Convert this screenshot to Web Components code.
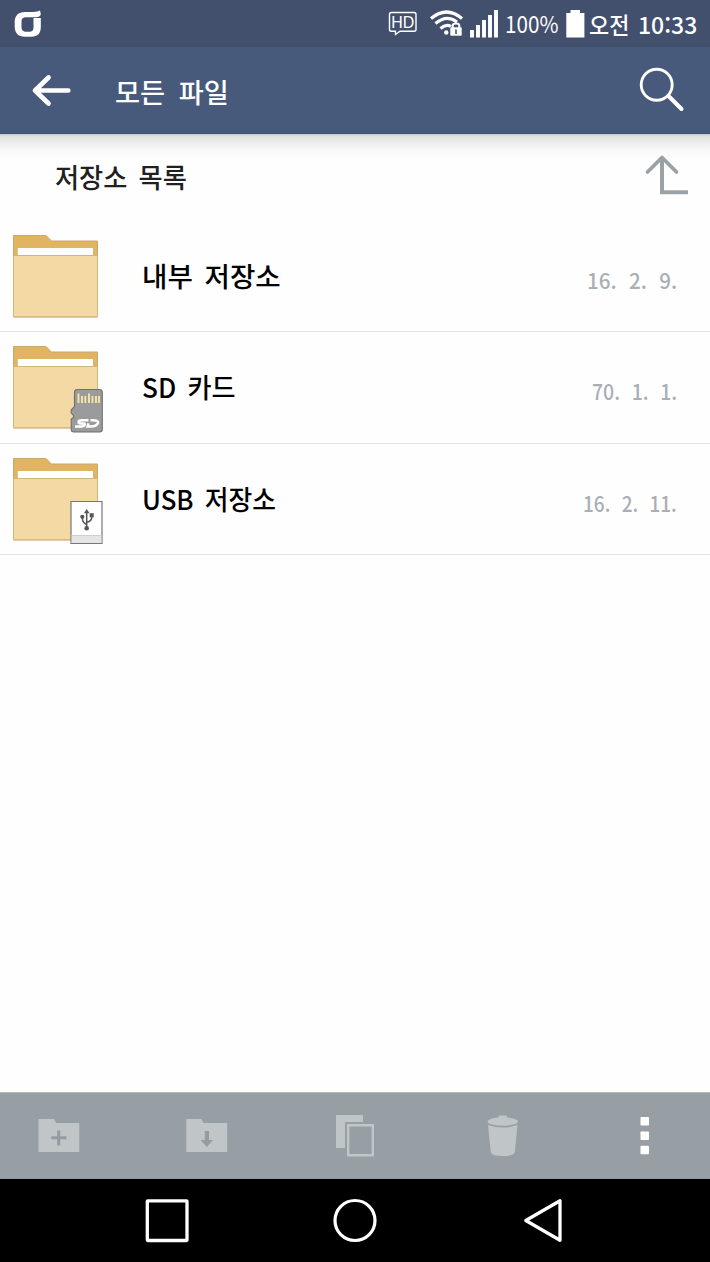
<!DOCTYPE html>
<html lang="ko">
<head>
<meta charset="utf-8">
<title>모든 파일</title>
<style>
html,body{margin:0;background:#fefefe}
body{width:710px;height:1262px;overflow:hidden;font-family:"Noto Sans CJK KR","Noto Sans",sans-serif}
</style>
</head>
<body>
<file-manager></file-manager>
<script>
const define = (name, html, init) => customElements.define(name, class extends HTMLElement {
  constructor() {
    super();
    this.attachShadow({ mode: 'open' }).innerHTML = html;
  }
  connectedCallback() { if (init) init.call(this, this.shadowRoot); }
});

// Single-line label condensed or expanded to the width it is given.
define('fit-label', `<style>
:host{display:block;white-space:nowrap;line-height:1;flex:none}
span{display:inline-block;transform-origin:0 50%}
</style><span><slot></slot></span>`, function (root) {
  const w = +this.getAttribute('width');
  const span = root.querySelector('span');
  this.style.width = w + 'px';
  span.style.transform = `scaleX(${w / span.offsetWidth})`;
});

define('status-bar', `<style>
:host{display:flex;box-sizing:border-box;height:47px;background:#42506e;border-bottom:1px solid #3f4d6b;color:#fff;align-items:flex-start}
svg{display:block;flex:none}
fit-label{font-size:23px;margin-top:12px;font-weight:400}
.pct{margin-left:5px}
.am{margin-left:4px;font-size:23px;font-weight:500;margin-top:13px}
.time{margin-left:9px;font-size:23px;margin-top:13px;font-weight:500}
.gap{flex:1}
.bat{margin-left:8px}
</style>
<svg width="50" height="46" fill="none" stroke="#fff">
 <path d="M40 10.500C38 12 34 12 29 12H25C18 12 14.700 16 14.700 22V26C14.700 33 18 36.800 25 36.800H31C38 36.800 40.800 33 40.800 27V18H33.500V27.500C33.500 30.500 32 31.700 29.500 31.700H26C23 31.700 21.500 30 21.500 27.500V21.500C21.500 18.500 23 17.200 26 17.200H36C39 17.200 40.800 16 40.800 14Z" fill="#fff" stroke="none"/>
</svg>
<span class="gap"></span>
<svg width="120" height="46" viewBox="380 0 120 46" fill="none" stroke="#fff">
 <path d="M391.500 12.500H414Q416 12.500 416 14.500V29.500Q416 31.300 414 31.300H400L395.500 34.500V31.300H391.500Q389.500 31.300 389.500 29.500V14.500Q389.500 12.500 391.500 12.500Z" stroke-width="1.400"/>
 <text x="391.200" y="28" font-family="Liberation Sans,sans-serif" font-size="17" textLength="23" lengthAdjust="spacingAndGlyphs" fill="#fff" stroke="none">HD</text>
 <path d="M431 18.500Q446.500 5.500 462 18.500" stroke-width="3.200"/>
 <path d="M435.500 23.500Q446.500 14 457 22" stroke-width="3.200"/>
 <path d="M440.500 28.500Q446 23.500 451 26.500" stroke-width="3.200"/>
 <circle cx="446.300" cy="32.500" r="2.200" fill="#fff" stroke="none"/>
 <rect x="450" y="27" width="12" height="9" rx="1" fill="#fff" stroke="#42506e" stroke-width=".6"/>
 <path d="M452.700 28V25.500Q452.700 23.500 456 23.500T459.300 25.500V28" stroke-width="2"/>
 <path d="M456 29.500V34" stroke="#42506e" stroke-width="1.600"/>
 <path d="M472 37.500V30M478 37.500V25M484 37.500V20M490 37.500V15M496 37.500V10" stroke-width="3.900"/>
</svg>
<fit-label class="pct" width="53">100%</fit-label>
<svg class="bat" width="19" height="46" viewBox="566 0 19 46"><path d="M566.300 13H570.500V10H580V13H584.400V37.500H566.300Z" fill="#fff"/></svg>
<fit-label class="am" width="40">오전</fit-label>
<fit-label class="time" width="59">10:33</fit-label>
<svg width="13" height="46"></svg>`);

define('app-header', `<style>
:host{display:flex;box-sizing:border-box;height:87px;background:#475a7b;border-bottom:1px solid #405273;color:#fff}
svg{display:block;flex:none}
fit-label{font-size:27px;font-weight:500;margin-top:31px;word-spacing:6px}
.gap{flex:1}
</style>
<svg width="115" height="86" viewBox="0 47 115 86" fill="none" stroke="#fff" stroke-linecap="round" stroke-linejoin="round"><path d="M48.500 77.500L35 90.500L48.500 103.500M35.500 90.500H68.300" stroke-width="4.700"/></svg>
<fit-label width="114">모든 파일</fit-label><span class="gap"></span>
<svg width="90" height="86" viewBox="620 47 90 86" fill="none" stroke="#fff"><circle cx="656.700" cy="84.700" r="15.500" stroke-width="2.900"/><path d="M668.500 96L681.500 109" stroke-width="4" stroke-linecap="round"/></svg>`);

define('list-header', `<style>
:host{display:flex;height:86px;color:#202020;background:linear-gradient(#cfcfcf 0,#cfcfcf 1px,#e0e0e0 2px,#ececec 8px,#f9f9f9 17px,#fefefe 26px)}
fit-label{font-size:27px;font-weight:500;margin:29px 0 0 55px;word-spacing:4px}
.gap{flex:1}
svg{display:block}
</style><fit-label width="132"><slot></slot></fit-label><span class="gap"></span>
<svg width="80" height="86" viewBox="630 134 80 86" fill="none" stroke="#9aa2a7"><path d="M662 158V192.200H688" stroke-width="4"/><path d="M647.500 172L662 157.500L676.500 172" stroke-width="3.800" stroke-linecap="round" stroke-linejoin="round"/></svg>`);

define('folder-icon', `<style>
:host{display:block;width:120px;height:96px;flex:none}
svg{display:block}
:host(:not([badge=sd])) .sd,:host(:not([badge=usb])) .usb{display:none}
</style>
<svg width="120" height="100" fill="none">
 <path d="M13.500 82V.5H46L51.500 6H97.500V82Z" fill="#e1b461" stroke="#c9a86c" stroke-width="1"/>
 <path d="M17.800 13H93V20.500H17.800Z" fill="#fff"/>
 <path d="M13.500 20.500H97.500V81.700H13.500Z" fill="#f4d9a4" stroke="#d3b57c" stroke-width="1"/>
 <g class="sd">
  <path d="M77 43.500H99.500Q102.300 43.500 102.300 46.300V83.500Q102.300 86 99.500 86H74Q71.200 86 71.200 83.500V73L73.500 71.500V69.500L71.200 67V64L74.500 60.500V46.500Q74.500 43.500 77 43.500Z" fill="#9b9b9b" stroke="#707070" stroke-width="1.100"/>
  <path d="M78.500 47.500V57M82 50V57M85.300 50V57M89 47.500V57M92.500 50V57M96 50V57M99 50V57" stroke="#f5e5a9" stroke-width="1.900"/>
  <path d="M88.500 74.300H82Q78.500 74.300 78.500 76T82 77.600H84Q85.500 77.800 84.500 79.300Q84 80.400 82 80.400H75" stroke="#fff" stroke-width="2.500"/>
  <path d="M90.500 74.300H93Q99 74.300 98 77Q96.700 80.400 90.500 80.400H87.500L88.500 77.300" stroke="#fff" stroke-width="2.500"/>
 </g>
 <g class="usb">
  <path d="M71 43.500H102V85.500H71Z" fill="#fff" stroke="#777" stroke-width="1.200"/>
  <path d="M71.700 77.200H101.400V85H71.700Z" fill="#e5e5e5"/><path d="M71.700 77.500H101.400" stroke="#cfcfcf"/>
  <g stroke="#555" stroke-width="1.500"><path d="M86.700 54V70M82.500 59.500V61Q82.500 64.500 86.700 66.500M91.700 58.500V59.500Q91.700 63 86.700 64.500"/></g>
  <path d="M86.700 51L89.500 55.200H83.900ZM89.700 55.300H93.700V59.300H89.700Z" fill="#555"/><circle cx="82.300" cy="58.800" r="2.100" fill="#555"/><circle cx="86.700" cy="70.300" r="2.300" fill="#555"/>
 </g>
</svg>`);

define('storage-row', `<style>
:host{display:flex;box-sizing:border-box;height:var(--h,112px);border-bottom:1px solid #e3e3e3;padding-right:33px}
folder-icon{margin-top:var(--top,15px)}
.name{font-size:27px;font-weight:500;color:#000;margin:var(--nt,42px) 0 0 22px;word-spacing:4px}
.gap{flex:1}
.date{font-size:22px;font-weight:500;color:#a9afb4;margin-top:var(--dt,48px);word-spacing:7px}
</style><folder-icon></folder-icon><fit-label class="name"><slot></slot></fit-label><span class="gap"></span><fit-label class="date"></fit-label>`, function (root) {
  const get = n => this.getAttribute(n) || '';
  root.querySelector('folder-icon').setAttribute('badge', get('badge'));
  // Labels measure themselves again once they hold their final text.
  const name = root.querySelector('.name'), date = root.querySelector('.date');
  name.setAttribute('width', get('name-width'));
  date.setAttribute('width', get('date-width'));
  date.textContent = get('date');
  for (const l of [name, date]) l.connectedCallback();
});

define('tool-bar', `<style>
:host{display:block;box-sizing:border-box;height:87px;background:#979ea4;border-top:1px solid #b4b9bc;border-bottom:1px solid #8e9699}
div{display:grid;grid-template-columns:118px 178px 118px 178px 118px}
svg{display:block}
</style><div>
<svg width="118" height="85" viewBox="0 1093 118 85"><path d="M38.500 1152V1119H54L56 1123H79.300V1152Z" fill="#c0c5c8"/><path d="M58.700 1130.500V1145.500M51.200 1137.800H66.500" stroke="#949ca1" stroke-width="3"/></svg>
<svg width="178" height="85" viewBox="118 1093 178 85"><path d="M186.300 1152V1119H201.500L203.500 1123H227.200V1152Z" fill="#c0c5c8"/><path d="M204.800 1131H209V1140H213L206.900 1147L200.700 1140H204.800Z" fill="#949ca1"/></svg>
<svg width="118" height="85" viewBox="296 1093 118 85"><path d="M336 1115H363V1122H345V1148H336Z" fill="#c0c5c8"/><path d="M348.200 1125.200H372.800V1155.300H348.200Z" fill="none" stroke="#c0c5c8" stroke-width="2.400"/></svg>
<svg width="178" height="85" viewBox="414 1093 178 85" fill="#c0c5c8"><path d="M498.500 1118V1116.500Q498.500 1115.500 500 1115.500H505.500Q507 1115.500 507 1116.500V1118Z"/><ellipse cx="502.800" cy="1121.500" rx="15.200" ry="4.300"/><path d="M488 1125Q502.800 1130 517.500 1125L514.800 1152.500Q513.500 1156 502.800 1156T490.800 1152.500Z"/></svg>
<svg width="118" height="85" viewBox="592 1093 118 85" fill="#fff"><rect x="640.500" y="1117" width="8.500" height="8.500" rx=".8"/><rect x="640.500" y="1131.500" width="8.500" height="8.500" rx=".8"/><rect x="640.500" y="1145.800" width="8.500" height="8.500" rx=".8"/></svg>
</div>`);

define('nav-bar', `<style>
:host{display:grid;grid-template-columns:261px 188px 261px;height:83px;background:#000}
svg{display:block}
</style>
<svg width="261" height="83" viewBox="0 1179 261 83" fill="none" stroke="#fff" stroke-width="3.300"><rect x="147.300" y="1200.800" width="39.700" height="39.700" rx=".5"/></svg>
<svg width="188" height="83" viewBox="261 1179 188 83" fill="none" stroke="#fff" stroke-width="3.200"><circle cx="355" cy="1220.500" r="20"/></svg>
<svg width="261" height="83" viewBox="449 1179 261 83" fill="none" stroke="#fff" stroke-width="3.300" stroke-linejoin="round"><path d="M525.800 1220.500L560 1200.800V1240.300Z"/></svg>`);

define('file-manager', `<style>
:host{display:flex;flex-direction:column;width:710px;height:1262px;background:#fefefe}
.rest{flex:1}
</style>
<status-bar></status-bar><app-header></app-header>
<list-header>저장소 목록</list-header>
<storage-row name-width="139" date="16. 2. 9." date-width="90">내부 저장소</storage-row>
<storage-row name-width="94" date="70. 1. 1." date-width="85" badge="sd" style="--top:14px;--nt:41px;--dt:47px">SD 카드</storage-row>
<storage-row name-width="134" date="16. 2. 11." date-width="94" badge="usb" style="--h:111px;--top:14px;--nt:41px;--dt:47px">USB 저장소</storage-row>
<div class="rest"></div><tool-bar></tool-bar><nav-bar></nav-bar>`);
</script>
</body>
</html>
